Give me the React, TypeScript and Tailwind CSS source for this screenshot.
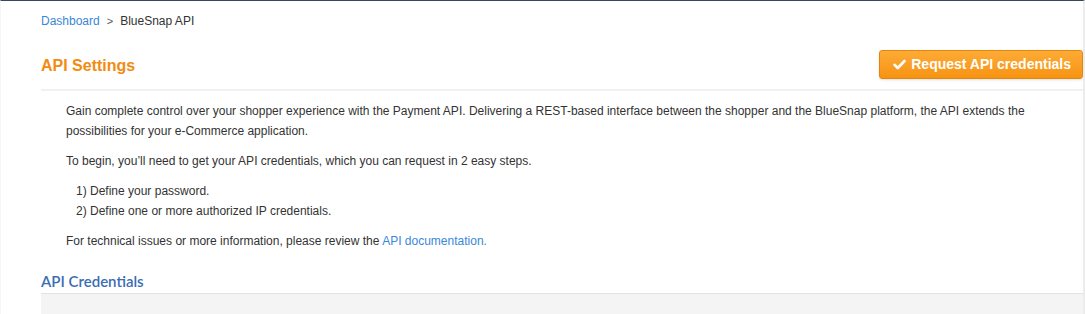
import React from 'react';

const Check: React.FC = () => (
  <svg width="13" height="11" viewBox="0 0 13 11" className="shrink-0">
    <path d="M1.5 5.8 L4.8 9 L11.5 2" fill="none" stroke="#fff" strokeWidth="2.6" strokeLinecap="round" strokeLinejoin="round" />
  </svg>
);

export default function App() {
  return (
    <div className="w-full h-[314px] overflow-hidden bg-white border-t border-[#34495e] border-r-2 border-r-[#ececec] border-l border-l-[#f6f6f6] font-['Liberation_Sans',Arial,sans-serif] text-[12px] text-[#333]">
      <div className="pl-[40px]">
        {/* breadcrumb */}
        <div className="mt-[10px] h-[20px] leading-[20px] flex items-center gap-[7px]">
          <a className="text-[#3a87d8]">Dashboard</a>
          <span className="text-[#555] text-[11px]">&gt;</span>
          <span className="text-[#333]">BlueSnap API</span>
        </div>

        {/* header */}
        <div className="mt-[19px] flex items-center justify-between h-[29px]">
          <h1 className="text-[16px] font-bold text-[#f28b12] leading-[29px] pt-[1px]">API Settings</h1>
          <button className="h-[29px] pl-[13px] pr-[11px] flex items-center gap-[5px] rounded-[3px] border border-[#e2860c] bg-gradient-to-b from-[#fdab35] to-[#f7930f] text-white font-bold text-[14px] shadow-sm">
            <Check />
            <span>Request API credentials</span>
          </button>
        </div>

        <div className="mt-[10px] border-b-2 border-[#f1f1f1]" />

        {/* intro */}
        <div className="pl-[25px] pr-[40px] pt-[10px] leading-[20px] text-[#333]">
          <p>
            Gain complete control over your shopper experience with the Payment API. Delivering a REST-based interface between the shopper and the BlueSnap platform, the API extends the possibilities for your e-Commerce application.
          </p>
          <p className="mt-[10px]">To begin, you’ll need to get your API credentials, which you can request in 2 easy steps.</p>
          <ol className="mt-[10px] pl-[10px]">
            <li>1) Define your password.</li>
            <li>2) Define one or more authorized IP credentials.</li>
          </ol>
          <p className="mt-[10px]">
            For technical issues or more information, please review the <a className="text-[#3a87d8]">API documentation.</a>
          </p>
        </div>

        {/* credentials */}
        <h2 className="mt-[18px] h-[24px] leading-[24px] text-[15px] text-[#3a6db3] font-['Lato',sans-serif] font-semibold">API Credentials</h2>
        <div className="border-t border-[#e3e3e3] bg-[#f4f4f4] h-[40px]" />
      </div>
    </div>
  );
}
